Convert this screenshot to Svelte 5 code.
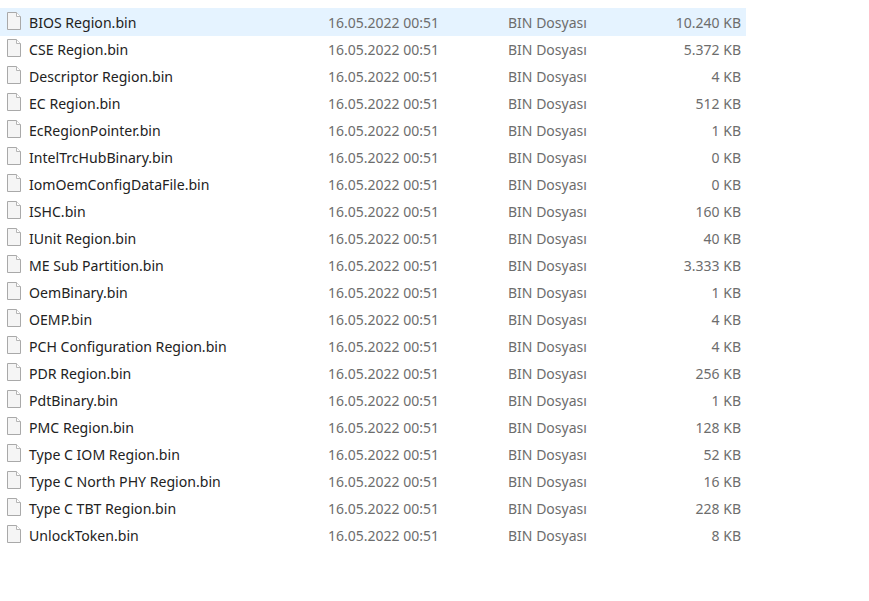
<script>
	const files = [
		['BIOS Region.bin', '10.240 KB'],
		['CSE Region.bin', '5.372 KB'],
		['Descriptor Region.bin', '4 KB'],
		['EC Region.bin', '512 KB'],
		['EcRegionPointer.bin', '1 KB'],
		['IntelTrcHubBinary.bin', '0 KB'],
		['IomOemConfigDataFile.bin', '0 KB'],
		['ISHC.bin', '160 KB'],
		['IUnit Region.bin', '40 KB'],
		['ME Sub Partition.bin', '3.333 KB'],
		['OemBinary.bin', '1 KB'],
		['OEMP.bin', '4 KB'],
		['PCH Configuration Region.bin', '4 KB'],
		['PDR Region.bin', '256 KB'],
		['PdtBinary.bin', '1 KB'],
		['PMC Region.bin', '128 KB'],
		['Type C IOM Region.bin', '52 KB'],
		['Type C North PHY Region.bin', '16 KB'],
		['Type C TBT Region.bin', '228 KB'],
		['UnlockToken.bin', '8 KB']
	];
</script>

<div class="list">
	{#each files as [name, size], i}
		<div class="row" class:selected={i === 0}>
			<svg class="icon" width="16" height="18" viewBox="0 0 16 18">
				<path d="M1.5 0.5H10.5L14.5 4.5V17.5H1.5Z" fill="#f5f5f5" stroke="#a9a9a9" />
				<path d="M10.5 0.5V4.5H14.5" fill="#fff" stroke="#b5b5b5" />
			</svg>
			<span class="name">{name}</span>
			<span class="date">16.05.2022 00:51</span>
			<span class="type">BIN Dosyası</span>
			<span class="size">{size}</span>
		</div>
	{/each}
</div>

<style>
	:global(body) {
		background: #fff;
	}

	.list {
		width: 746px;
		padding-top: 8px;
		font-family: 'Noto Sans', sans-serif;
		font-size: 14px;
	}

	.row {
		display: flex;
		align-items: center;
		height: 27px;
		color: #6d6d6d;
	}

	.selected {
		height: 28px;
		margin-bottom: -0.5px;
		background: #e5f3ff;
	}

	.icon {
		flex: none;
		margin: 0 7px 2px 6px;
	}

	.name {
		width: 299px;
		color: #222;
		font-size: 14.1px;
	}

	.date {
		width: 180px;
	}

	.type {
		width: 100px;
	}

	.size {
		width: 133px;
		text-align: right;
	}
</style>
